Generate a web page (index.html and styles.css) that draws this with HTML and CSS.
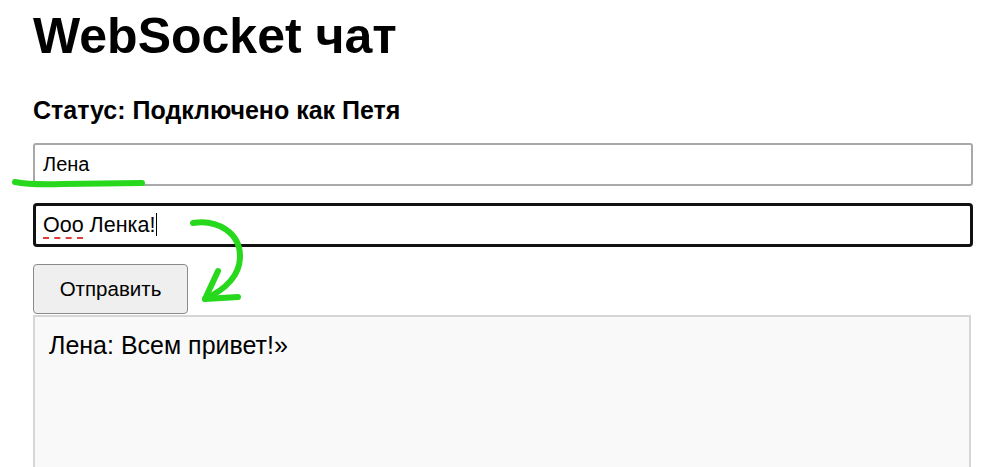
FILE: index.html
```html
<!DOCTYPE html>
<html lang="ru">
<head>
    <meta charset="UTF-8">
    <meta name="viewport" content="width=device-width, initial-scale=1.0">
    <title>WebSocket чат</title>
    <link rel="stylesheet" href="styles.css">
</head>
<body>
    <h1>WebSocket чат</h1>
    <div id="status" class="status">Статус: Подключено как Петя</div>

    <input type="text" id="name" class="field" value="Лена">
    <div id="message" class="field focused"><span class="misspelled">Ооо</span> Ленка!<span class="caret"></span></div>
    <button class="send-btn">Отправить</button>

    <div id="chat" class="chat-box">
        <div class="chat-line">Лена: Всем привет!»</div>
    </div>

    <!-- hand drawn marks over the screenshot -->
    <svg class="marks" width="999" height="467" viewBox="0 0 999 467">
        <path d="M15 182 Q 30 185 62 184 L 142 183" />
        <path d="M193 223 C 216 219 241 232 240 258 C 239 278 222 291 205 299" />
        <path d="M218 271 L 205 299 L 238 297" />
    </svg>
</body>
</html>
```

FILE: styles.css
```css
html {
    overflow: hidden;
}
body {
    font-family: "Liberation Sans", Arial, sans-serif;
    color: #000;
    margin: 0;
    padding: 0 26px 0 33px;
    position: relative;
}
h1 {
    font-size: 50px;
    font-weight: bold;
    margin: 7px 0 0;
    color: #000;
}
.status {
    font-size: 25px;
    font-weight: bold;
    margin-top: 31px;
}
.field {
    display: block;
    box-sizing: border-box;
    width: 100%;
    height: 43px;
    margin-top: 18px;
    padding: 0 8px;
    font-family: inherit;
    font-size: 20px;
    color: #000;
    background: #fff;
    border: 2px solid #a9a9a9;
    border-radius: 3px;
    outline: none;
}
.focused {
    height: 44px;
    margin-top: 17px;
    padding: 0 7px;
    font-size: 21.5px;
    border: 3px solid #111;
    border-radius: 4px;
    line-height: 38px;
}
.misspelled {
    text-decoration: underline dashed #e23b3b;
    text-decoration-thickness: 2px;
    text-underline-offset: 5px;
}
.caret {
    display: inline-block;
    width: 1px;
    height: 23px;
    margin-left: 1px;
    background: #000;
    vertical-align: -4px;
}
.send-btn {
    display: block;
    width: 155px;
    height: 50px;
    margin-top: 17px;
    font-family: inherit;
    font-size: 20.5px;
    color: #000;
    background: #efefef;
    border: 1px solid #8a8a8a;
    border-radius: 4px;
}
.chat-box {
    box-sizing: border-box;
    width: 938px;
    height: 260px;
    margin-top: 1px;
    padding: 14px 14px;
    background: #f9f9f9;
    border: 2px solid #d6d6d6;
}
.chat-line {
    font-size: 25px;
    color: #000;
}
.marks {
    position: absolute;
    top: 0;
    left: 0;
    pointer-events: none;
}
.marks path {
    fill: none;
    stroke: #27d81c;
    stroke-width: 6;
    stroke-linecap: round;
    stroke-linejoin: round;
}
```
